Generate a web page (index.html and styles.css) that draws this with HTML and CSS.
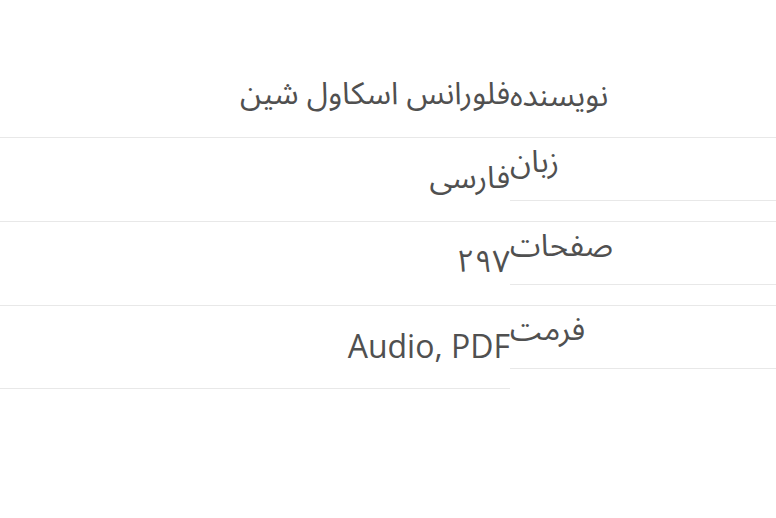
FILE: index.html
```html
<!DOCTYPE html>
<html lang="fa" dir="rtl">
<head>
<meta charset="utf-8">
<link rel="stylesheet" href="styles.css">
</head>
<body>
<dl class="specs">
  <div class="row first">
    <dt class="label">نویسنده</dt>
    <dd class="value">فلورانس اسکاول شین</dd>
  </div>
  <div class="row">
    <dt class="label">زبان</dt>
    <dd class="value">فارسی</dd>
  </div>
  <div class="row">
    <dt class="label">صفحات</dt>
    <dd class="value">۲۹۷</dd>
  </div>
  <div class="row last">
    <dt class="label">فرمت</dt>
    <dd class="value latin" dir="ltr">Audio, PDF</dd>
  </div>
</dl>
</body>
</html>
```
FILE: styles.css
```css
html, body {
  margin: 0;
  padding: 0;
  background: #fff;
}
body {
  font-family: "Open Sans", "Noto Sans Arabic", "DejaVu Sans", sans-serif;
  color: #505050;
  font-size: 31px;
}
.specs {
  margin: 0;
  padding-top: 53px;
}
.row {
  display: flex;
  flex-direction: row;
  height: 84px;
  box-sizing: border-box;
  border-top: 1px solid #e8e8e8;
}
.row.first {
  border-top: none;
}
.label {
  width: 266px;
  flex: none;
  margin: 0;
  text-align: left;
  box-sizing: border-box;
  height: 63px;
  border-bottom: 1px solid #e8e8e8;
  line-height: 40px;
  padding-top: 2px;
}
.row.first .label {
  height: auto;
  border-bottom: none;
  display: flex;
  align-items: center;
  justify-content: flex-end;
  padding: 0 0 2px 0;
}
.value {
  flex: 1;
  margin: 0;
  display: flex;
  align-items: center;
  justify-content: flex-start;
  box-sizing: border-box;
  padding-bottom: 3px;
}
.value.latin {
  justify-content: flex-end;
  font-size: 32px;
}
.row.last .value {
  border-bottom: 1px solid #e8e8e8;
}
```
